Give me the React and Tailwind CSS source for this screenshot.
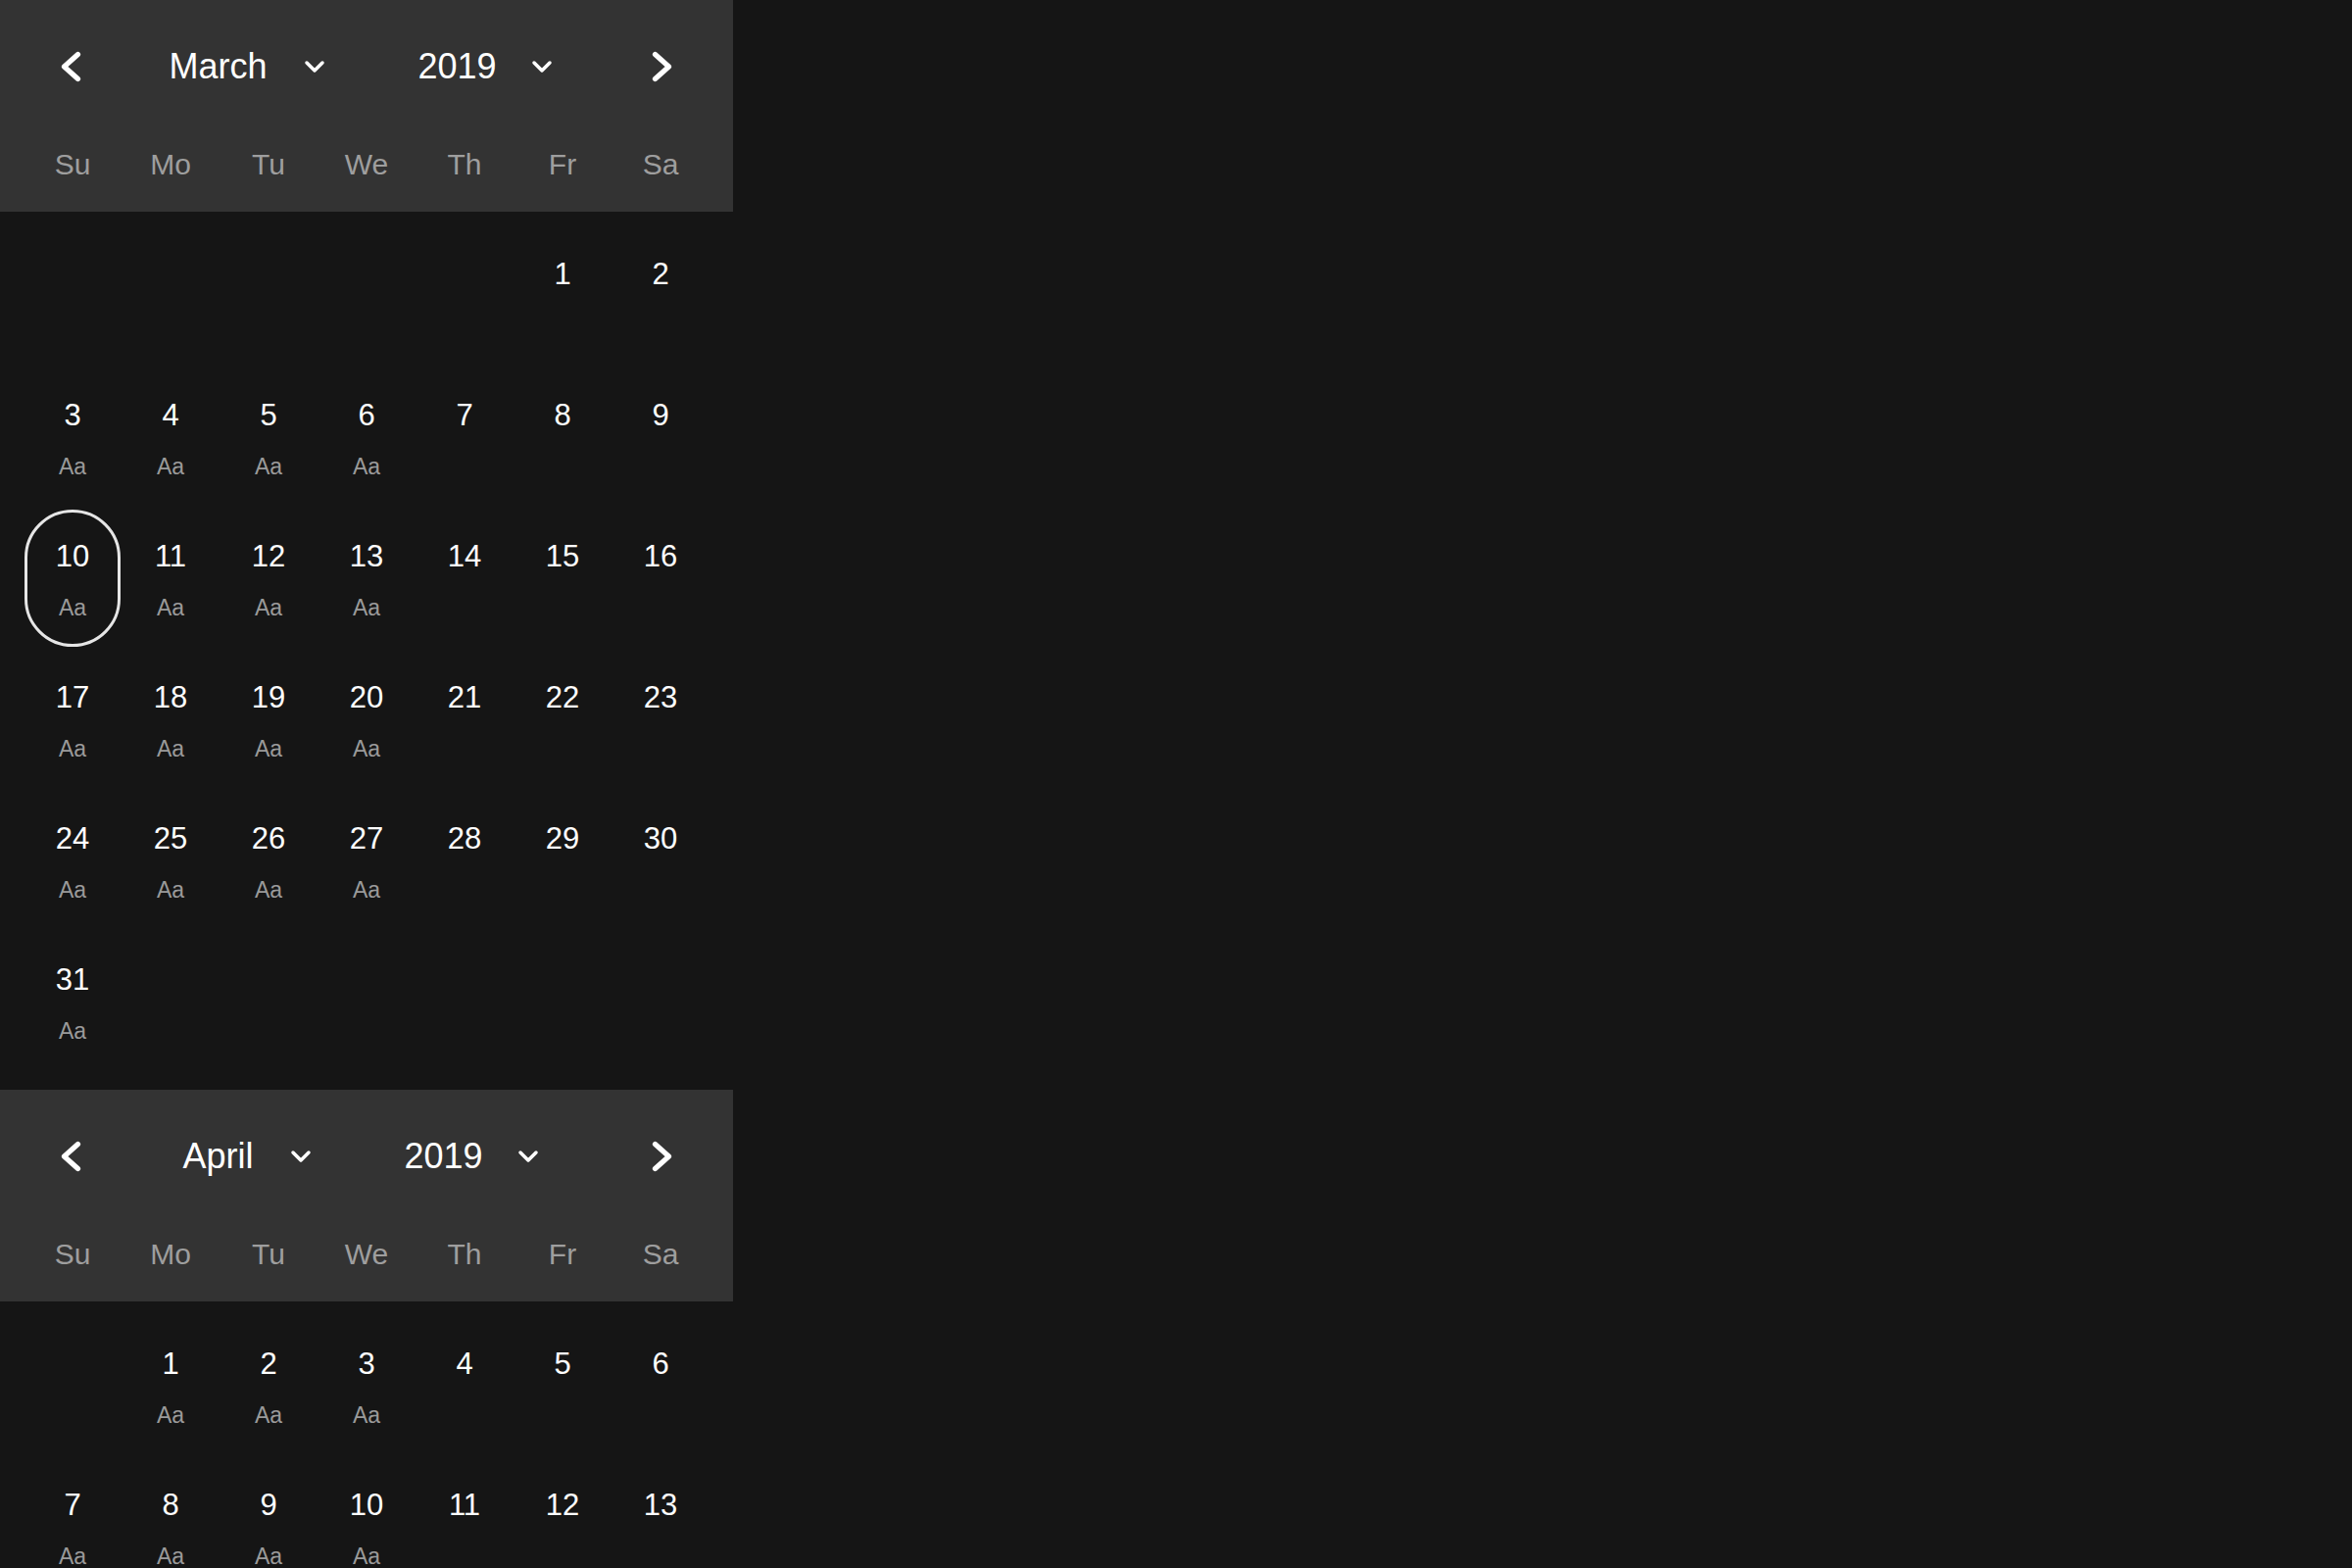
import React from "react";

const WEEKDAYS = ["Su", "Mo", "Tu", "We", "Th", "Fr", "Sa"];
const MONTHS = [
  "January", "February", "March", "April", "May", "June",
  "July", "August", "September", "October", "November", "December",
];

const buildWeeks = (year, month) => {
  const first = new Date(year, month, 1).getDay();
  const total = new Date(year, month + 1, 0).getDate();
  const cells = [];
  for (let i = 0; i < first; i++) cells.push(null);
  for (let d = 1; d <= total; d++) cells.push(d);
  while (cells.length % 7 !== 0) cells.push(null);
  const weeks = [];
  for (let i = 0; i < cells.length; i += 7) weeks.push(cells.slice(i, i + 7));
  return weeks;
};

const ChevronLeft = () => (
  <svg width="24" height="34" viewBox="0 0 24 34" fill="none" className="mt-[4px]">
    <polyline points="17.5,4.5 3.5,17 17.5,29.5" stroke="white" strokeWidth="5.2" strokeLinecap="round" strokeLinejoin="round" />
  </svg>
);

const ChevronRight = () => (
  <svg width="24" height="34" viewBox="0 0 24 34" fill="none" className="mt-[4px]">
    <polyline points="6.5,4.5 20.5,17 6.5,29.5" stroke="white" strokeWidth="5.2" strokeLinecap="round" strokeLinejoin="round" />
  </svg>
);

const CaretDown = () => (
  <svg width="22" height="14" viewBox="0 0 22 14" fill="none">
    <polyline points="3,3 11,11 19,3" stroke="white" strokeWidth="3.5" strokeLinecap="round" strokeLinejoin="round" />
  </svg>
);

const Calendar = ({ year, month, selected }) => {
  const weeks = buildWeeks(year, month);

  return (
    <div className="w-[748px]">
      <div className="bg-[#333333] px-6 pb-[14px]">
        <div className="h-[132px] flex items-center">
          <div className="w-[100px] flex justify-center">
            <ChevronLeft />
          </div>
          <div className="flex-1 flex items-center justify-center gap-[94px] pr-[12px] mt-[3px] text-white text-[36px]">
            <div className="flex items-center gap-[38px]">
              <span>{MONTHS[month]}</span>
              <CaretDown />
            </div>
            <div className="flex items-center gap-[35px]">
              <span>{year}</span>
              <CaretDown />
            </div>
          </div>
          <div className="w-[100px] flex justify-center">
            <ChevronRight />
          </div>
        </div>
        <div className="h-[70px] grid grid-cols-7 items-center text-[30px] text-[#9e9e9e]">
          {WEEKDAYS.map((w) => (
            <div key={w} className="text-center">
              {w}
            </div>
          ))}
        </div>
      </div>

      <div className="px-6 py-4">
        {weeks.map((week, wi) => (
          <div key={wi} className="grid grid-cols-7 h-[144px]">
            {week.map((day, di) => (
              <div key={di}>
                {day && (
                  <div
                    className={
                      "mx-[1px] h-[140px] flex flex-col items-center pt-[27px] rounded-full border-[3px] " +
                      (day === selected ? "border-[#e6e6e6]" : "border-transparent")
                    }
                  >
                    <span className="text-[31px] leading-[36px] text-white">{day}</span>
                    {di <= 3 && (
                      <span className="mt-5 text-[23px] leading-[28px] text-[#9a9a9a]">Aa</span>
                    )}
                  </div>
                )}
              </div>
            ))}
          </div>
        ))}
      </div>
    </div>
  );
};

const App = () => {
  return (
    <div className="min-h-screen bg-[#151515] font-['Liberation_Sans',Arial,sans-serif]">
      <Calendar year={2019} month={2} selected={10} />
      <Calendar year={2019} month={3} />
    </div>
  );
};

export default App;
